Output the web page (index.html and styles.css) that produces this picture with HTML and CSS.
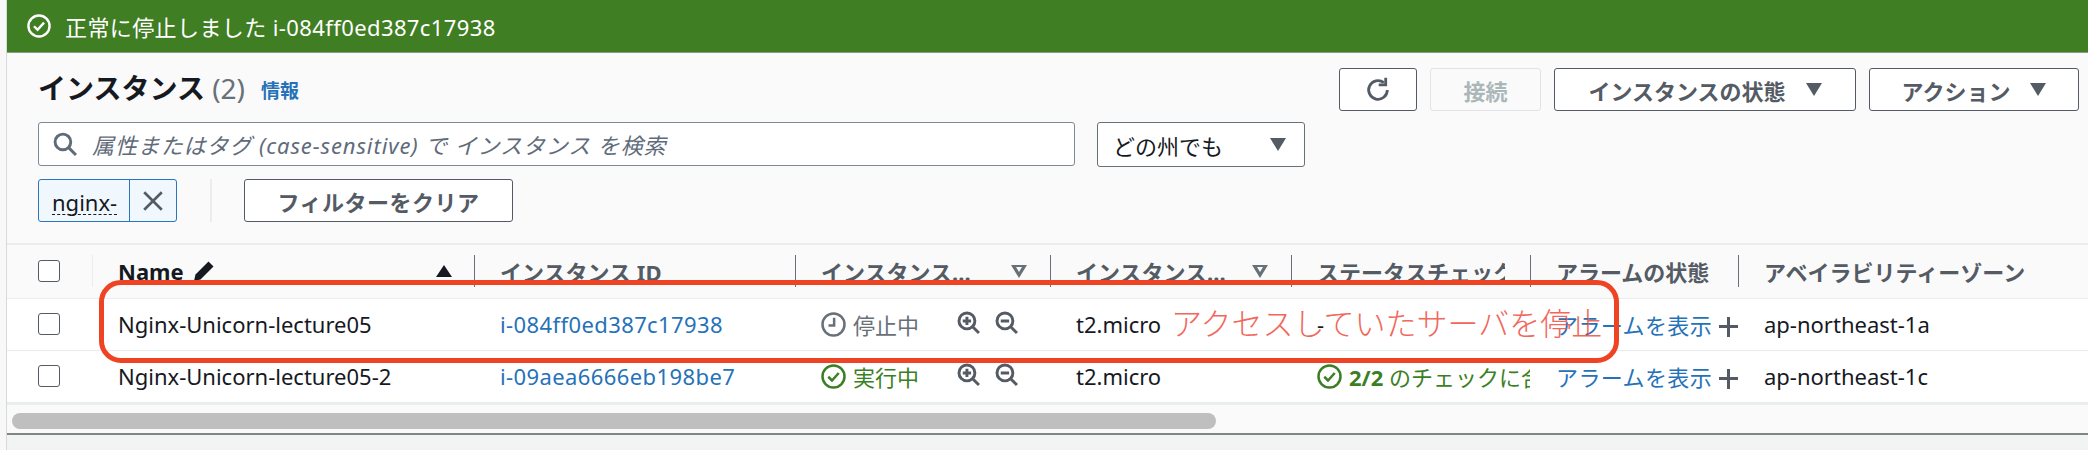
FILE: index.html
```html
<!DOCTYPE html>
<html lang="ja">
<head>
    <meta charset="UTF-8">
    <meta name="viewport" content="width=device-width, initial-scale=1.0">
    <title>インスタンス</title>
    <link rel="stylesheet" href="styles.css">
</head>
<body>
    <svg class="icon-defs" aria-hidden="true">
        <symbol id="i-check" viewBox="0 0 20 20">
            <circle cx="10" cy="10" r="8.8" fill="none" stroke="currentColor" stroke-width="2"/>
            <path d="M5.800 10.200l3 3 5.400-6" fill="none" stroke="currentColor" stroke-width="2"/>
        </symbol>
        <symbol id="i-clock" viewBox="0 0 20 20">
            <circle cx="10" cy="10" r="8.8" fill="none" stroke="currentColor" stroke-width="2"/>
            <path d="M10.500 4.500v6.200H6" fill="none" stroke="currentColor" stroke-width="2"/>
        </symbol>
        <symbol id="i-zoom-in" viewBox="0 0 22 22">
            <circle cx="9.500" cy="9.500" r="7.600" fill="none" stroke="currentColor" stroke-width="2.800"/>
            <path d="M15 15l6 6M5.500 9.500h8M9.500 5.500v8" fill="none" stroke="currentColor" stroke-width="2.800"/>
        </symbol>
        <symbol id="i-zoom-out" viewBox="0 0 22 22">
            <circle cx="9.500" cy="9.500" r="7.600" fill="none" stroke="currentColor" stroke-width="2.800"/>
            <path d="M15 15l6 6M5.500 9.500h8" fill="none" stroke="currentColor" stroke-width="2.800"/>
        </symbol>
    </svg>

    <div class="page">
        <!-- Flash message -->
        <div class="banner">
            <svg class="banner-icon"><use href="#i-check"/></svg>
            <span>正常に停止しました i-084ff0ed387c17938</span>
        </div>

        <section class="panel">
            <div class="toolbar">
                <div class="title-row">
                    <h1 class="title">インスタンス <span class="count">(2)</span></h1>
                    <a class="info">情報</a>
                    <div class="actions">
                        <button class="btn btn-refresh" aria-label="更新">
                            <svg width="28" height="28" viewBox="0 0 24 24"><path d="M20 12a8 8 0 1 1-3-6.300" fill="none" stroke="currentColor" stroke-width="2.400"/><path d="M18.600 1.600v6h-6" fill="none" stroke="currentColor" stroke-width="2.400"/></svg>
                        </button>
                        <button class="btn btn-disabled">接続</button>
                        <button class="btn btn-state">インスタンスの状態<span class="caret"></span></button>
                        <button class="btn btn-action">アクション<span class="caret"></span></button>
                    </div>
                </div>

                <div class="search-row">
                    <div class="search">
                        <svg width="24" height="24" viewBox="0 0 23 23"><circle cx="9.500" cy="9.500" r="7.500" fill="none" stroke="currentColor" stroke-width="2.800"/><path d="M15 15l7 7" fill="none" stroke="currentColor" stroke-width="2.800"/></svg>
                        <span>属性またはタグ (case-sensitive) で インスタンス を検索</span>
                    </div>
                    <div class="region">どの州でも<span class="caret"></span></div>
                </div>

                <div class="filter-row">
                    <div class="token">
                        <span class="token-label"><span>nginx-</span></span>
                        <span class="token-close">
                            <svg width="22" height="22" viewBox="0 0 20 20"><path d="M2 2l16 16M18 2L2 18" fill="none" stroke="currentColor" stroke-width="2.400"/></svg>
                        </span>
                    </div>
                    <div class="filter-sep"></div>
                    <button class="btn btn-clear">フィルターをクリア</button>
                </div>
            </div>

            <table class="grid">
                <colgroup>
                    <col class="c-check"><col class="c-name"><col class="c-id"><col class="c-state">
                    <col class="c-type"><col class="c-status"><col class="c-alarm"><col>
                </colgroup>
                <thead>
                    <tr>
                        <th><div class="cell-check"><span class="checkbox"></span></div></th>
                        <th><div class="th-inner th-name">
                            <span>Name</span>
                            <svg class="pencil" width="22" height="22" viewBox="0 0 22 22"><path d="M15.500 1.500l5 5L7.500 19.500 1 21l1.500-6.500z" fill="currentColor"/></svg>
                            <span class="sort-up"></span>
                        </div></th>
                        <th><div class="th-inner">インスタンス ID</div></th>
                        <th><div class="th-inner">インスタンス...<span class="filter-mark"></span></div></th>
                        <th><div class="th-inner">インスタンス...<span class="filter-mark"></span></div></th>
                        <th><div class="th-inner"><span class="clip">ステータスチェック</span></div></th>
                        <th><div class="th-inner">アラームの状態</div></th>
                        <th><div class="th-inner">アベイラビリティーゾーン</div></th>
                    </tr>
                </thead>
                <tbody>
                    <tr class="row-one">
                        <td><div class="cell-check"><span class="checkbox"></span></div></td>
                        <td class="pad">Nginx-Unicorn-lecture05</td>
                        <td class="pad"><a class="link">i-084ff0ed387c17938</a></td>
                        <td class="pad">
                            <div class="state state-stopped">
                                <svg class="state-icon"><use href="#i-clock"/></svg>
                                <span class="state-text">停止中</span>
                                <svg class="zoom-icon"><use href="#i-zoom-in"/></svg>
                                <svg class="zoom-icon"><use href="#i-zoom-out"/></svg>
                            </div>
                        </td>
                        <td class="pad">t2.micro</td>
                        <td class="pad">-</td>
                        <td class="pad"><a class="link">アラームを表示</a><span class="plus"></span></td>
                        <td class="pad">ap-northeast-1a</td>
                    </tr>
                    <tr class="row-two">
                        <td><div class="cell-check"><span class="checkbox"></span></div></td>
                        <td class="pad">Nginx-Unicorn-lecture05-2</td>
                        <td class="pad"><a class="link">i-09aea6666eb198be7</a></td>
                        <td class="pad">
                            <div class="state state-running">
                                <svg class="state-icon"><use href="#i-check"/></svg>
                                <span class="state-text">実行中</span>
                                <svg class="zoom-icon"><use href="#i-zoom-in"/></svg>
                                <svg class="zoom-icon"><use href="#i-zoom-out"/></svg>
                            </div>
                        </td>
                        <td class="pad">t2.micro</td>
                        <td class="pad">
                            <div class="checks">
                                <svg class="state-icon"><use href="#i-check"/></svg>
                                <span><b>2/2</b> のチェックに合格しました</span>
                            </div>
                        </td>
                        <td class="pad"><a class="link">アラームを表示</a><span class="plus"></span></td>
                        <td class="pad">ap-northeast-1c</td>
                    </tr>
                </tbody>
            </table>

            <div class="scroll-track"><div class="scroll-thumb"></div></div>
        </section>

        <div class="footer"></div>

        <!-- Hand-drawn annotation over the table -->
        <div class="note-box"></div>
        <div class="note-text">アクセスしていたサーバを停止</div>
    </div>
</body>
</html>
```

FILE: styles.css
```css
* {
    box-sizing: border-box;
}

body {
    margin: 0;
    font-family: "Noto Sans", "Noto Sans CJK JP", sans-serif;
    font-size: 22px;
    color: #16191f;
    background-color: #f8f8f8;
}

.icon-defs {
    display: none;
}

.page {
    position: relative;
    height: 450px;
    margin-left: 6px;
    overflow: hidden;
    border-left: 1px solid #d5dbdb;
    display: flex;
    flex-direction: column;
}

/* Flash message */
.banner {
    flex: none;
    height: 53px;
    padding-left: 20px;
    display: flex;
    align-items: center;
    gap: 14px;
    color: #fff;
    background-color: #3f7e23;
    border-bottom: 1px solid #8a9a86;
    letter-spacing: 0.4px;
}

.banner-icon {
    width: 24px;
    height: 24px;
}

.panel {
    flex: none;
    height: 382px;
    background-color: #fafafa;
    border-bottom: 2px solid #7f8688;
}

.footer {
    flex: 1;
    background-color: #f2f3f3;
}

/* Toolbar */
.toolbar {
    height: 192px;
    padding: 15px 9px 0 31px;
    border-bottom: 2px solid #eaeded;
}

.title-row {
    display: flex;
    align-items: center;
    height: 43px;
}

.title {
    margin: -4px 0 0;
    font-size: 28px;
    line-height: 36px;
    font-weight: 700;
}

.count {
    font-weight: 400;
    color: #687078;
}

.info {
    margin-left: 16px;
    font-size: 19px;
    font-weight: 700;
    color: #2672b8;
}

.actions {
    margin-left: auto;
    display: flex;
    gap: 13px;
}

.btn {
    height: 43px;
    padding: 0;
    display: flex;
    align-items: center;
    justify-content: center;
    font-family: inherit;
    font-size: 22px;
    font-weight: 700;
    color: #545b64;
    background-color: #fff;
    border: 1px solid #545b64;
    border-radius: 3px;
}

.btn-refresh {
    width: 78px;
}

.btn-disabled {
    width: 111px;
    color: #aab7b8;
    background-color: #fafafa;
    border-color: #e1e4e6;
}

.btn-state {
    width: 302px;
    gap: 20px;
}

.btn-action {
    width: 210px;
    gap: 20px;
}

.caret {
    width: 0;
    height: 0;
    border-left: 8px solid transparent;
    border-right: 8px solid transparent;
    border-top: 13px solid #545b64;
}

.search-row {
    display: flex;
    gap: 22px;
    margin-top: 11px;
}

.search {
    width: 1037px;
    height: 44px;
    padding-left: 14px;
    display: flex;
    align-items: center;
    gap: 15px;
    color: #5f6b7a;
    background-color: #fff;
    border: 1px solid #7d8998;
    border-radius: 3px;
    font-style: italic;
    letter-spacing: 0.9px;
}

.search svg {
    flex: none;
}

.region {
    width: 208px;
    height: 45px;
    padding: 0 18px 0 15px;
    display: flex;
    align-items: center;
    justify-content: space-between;
    background-color: #fff;
    border: 1px solid #687078;
    border-radius: 3px;
}

.filter-row {
    display: flex;
    align-items: stretch;
    height: 43px;
    margin-top: 12px;
}

.token {
    width: 139px;
    display: flex;
    background-color: #f1f8fd;
    border: 1px solid #2b75bd;
    border-radius: 3px;
}

.token-label {
    width: 91px;
    padding-left: 13px;
    display: flex;
    align-items: center;
    border-right: 1px solid #2b75bd;
}

.token-label span {
    line-height: 24px;
    margin-top: 4px;
    border-bottom: 1px dashed #16191f;
}

.token-close {
    flex: 1;
    display: flex;
    align-items: center;
    justify-content: center;
    color: #545b64;
}

.filter-sep {
    width: 2px;
    margin-left: 33px;
    background-color: #eaeded;
}

.btn-clear {
    width: 269px;
    margin-left: 32px;
    letter-spacing: 0.5px;
}

/* Table */
.grid {
    width: 100%;
    table-layout: fixed;
    border-collapse: collapse;
}

.c-check { width: 85px; }
.c-name { width: 382px; }
.c-id { width: 321px; }
.c-state { width: 255px; }
.c-type { width: 241px; }
.c-status { width: 239px; }
.c-alarm { width: 208px; }

.grid thead tr {
    height: 53px;
}

.grid th {
    padding: 0;
    font-weight: 700;
    text-align: left;
    color: #545b64;
    background-color: #fafafa;
    border-bottom: 1px solid #eaeded;
}

.grid tbody tr {
    background-color: #fff;
}

.row-one {
    height: 52px;
    border-bottom: 1px solid #eaeded;
}

.row-two {
    height: 53px;
    border-bottom: 3px solid #eaeded;
}

.grid td {
    padding: 0;
    white-space: nowrap;
    overflow: hidden;
}

.grid td.pad {
    padding-left: 26px;
}

.cell-check {
    padding-left: 31px;
    display: flex;
    align-items: center;
}

.checkbox {
    width: 22px;
    height: 22px;
    background-color: #fff;
    border: 1px solid #545b64;
    border-radius: 3px;
}

.th-inner {
    height: 32px;
    padding-left: 25px;
    display: flex;
    align-items: center;
    white-space: nowrap;
    border-left: 1px solid #687078;
}

.th-name {
    padding-right: 22px;
    color: #16191f;
    border-left-color: #eaeded;
}

.pencil {
    margin-left: 9px;
}

.sort-up {
    margin-left: auto;
    width: 0;
    height: 0;
    border-left: 8px solid transparent;
    border-right: 8px solid transparent;
    border-bottom: 12px solid #16191f;
}

.filter-mark {
    position: relative;
    margin-left: auto;
    margin-right: 23px;
    width: 0;
    height: 0;
    border-left: 8px solid transparent;
    border-right: 8px solid transparent;
    border-top: 13px solid #687078;
}

.filter-mark::after {
    content: "";
    position: absolute;
    left: -3px;
    top: -11px;
    width: 0;
    height: 0;
    border-left: 3px solid transparent;
    border-right: 3px solid transparent;
    border-top: 5px solid #fafafa;
}

.clip {
    width: 188px;
    overflow: hidden;
}

.link {
    color: #2672b8;
    letter-spacing: 0.4px;
}

.state {
    display: flex;
    align-items: center;
    gap: 7px;
}

.state-icon {
    flex: none;
    width: 25px;
    height: 25px;
}

.state-text {
    width: 66px;
}

.state-stopped {
    color: #687078;
}

.state-running,
.checks {
    color: #3b7f25;
}

.checks {
    display: flex;
    align-items: center;
    gap: 7px;
}

.zoom-icon {
    width: 23px;
    height: 23px;
    margin-left: 8px;
    margin-top: -4px;
    color: #545b64;
}

.state-text + .zoom-icon {
    margin-left: 31px;
}

/* Alarm "+" drawn from two bars */
.plus {
    display: inline-block;
    position: relative;
    width: 20px;
    height: 20px;
    margin-left: 7px;
    vertical-align: -3px;
}

.plus::before,
.plus::after {
    content: "";
    position: absolute;
    background-color: #545b64;
}

.plus::before {
    left: 0;
    right: 0;
    top: 8px;
    height: 3px;
}

.plus::after {
    top: 0;
    bottom: 0;
    left: 8px;
    width: 3px;
}

.scroll-track {
    height: 29px;
    padding: 8px 0 0 5px;
}

.scroll-thumb {
    width: 1204px;
    height: 16px;
    border-radius: 8px;
    background-color: #bfbfbf;
}

/* Annotation */
.note-box {
    position: absolute;
    left: 92px;
    top: 280px;
    width: 1520px;
    height: 83px;
    border: 5px solid #ef4423;
    border-radius: 22px;
}

.note-text {
    position: absolute;
    left: 1164px;
    top: 301px;
    font-size: 31px;
    font-weight: 300;
    line-height: 44px;
    white-space: nowrap;
    color: #ef4d3f;
    opacity: 0.85;
}
```
